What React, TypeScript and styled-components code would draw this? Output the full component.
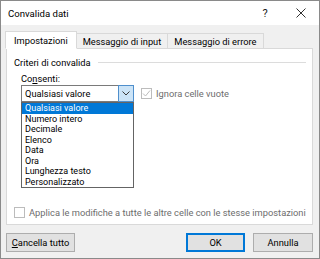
import React from 'react';
import styled, { createGlobalStyle } from 'styled-components';

const GlobalStyle = createGlobalStyle`
  html, body {
    margin: 0;
    padding: 0;
    background: #ffffff;
  }
  * {
    box-sizing: border-box;
  }
`;

const Window = styled.div`
  width: 320px;
  height: 259px;
  border: 1px solid #8a8a8a;
  display: flex;
  flex-direction: column;
  font-family: Roboto, 'Noto Sans', sans-serif;
  font-size: 9.3px;
  color: #000000;
  background: #f0f0f0;
  overflow: hidden;
`;

const TitleBar = styled.div`
  height: 24px;
  flex: none;
  display: flex;
  align-items: center;
  background: #ffffff;
`;

const Title = styled.div`
  flex: 1;
  padding-left: 7px;
  font-size: 9.6px;
  color: #000000;
`;

const TitleButton = styled.div`
  width: 36px;
  height: 24px;
  display: flex;
  align-items: center;
  justify-content: center;
  font-size: 11px;
  color: #1a1a1a;
`;

const Body = styled.div`
  flex: 1;
  display: flex;
  flex-direction: column;
  padding: 6px 6px 6px 4px;
`;

const TabRow = styled.div`
  display: flex;
  align-items: flex-end;
  height: 18px;
  margin-bottom: -1px;
  position: relative;
  z-index: 1;
`;

const Tab = styled.div<{ $active?: boolean }>`
  height: ${p => (p.$active ? '18px' : '15px')};
  padding: 0 ${p => (p.$active ? '8px' : '6px')};
  display: flex;
  align-items: center;
  border: 1px solid #d9d9d9;
  border-bottom: ${p => (p.$active ? '1px solid #ffffff' : 'none')};
  border-left: ${p => (p.$active ? '1px solid #d9d9d9' : 'none')};
  background: ${p => (p.$active ? '#ffffff' : '#f0f0f0')};
  margin-bottom: ${p => (p.$active ? '0' : '1px')};
  white-space: nowrap;
`;

const Panel = styled.div`
  height: 177px;
  flex: none;
  margin-left: 1px;
  background: #ffffff;
  border: 1px solid #d9d9d9;
  padding: 7px 6px 6px 7px;
  display: flex;
  flex-direction: column;
`;

const GroupHeader = styled.div`
  height: 12px;
  display: flex;
  align-items: center;
  gap: 7px;

  &::after {
    content: '';
    flex: 1;
    height: 1px;
    background: #dcdcdc;
  }
`;

const Group = styled.div`
  padding-left: 7px;
  display: flex;
  flex-direction: column;
`;

const FieldLabel = styled.div`
  height: 12px;
  margin-top: 4px;
  display: flex;
  align-items: center;
`;

const Accel = styled.span`
  text-decoration: underline;
  text-underline-offset: 1px;
`;

const ComboRow = styled.div`
  margin-top: 1px;
  display: flex;
  align-items: center;
  gap: 7px;
  height: 17px;
`;

const Combo = styled.div`
  position: relative;
  width: 113px;
  height: 17px;
  border: 1px solid #7a7a7a;
  display: flex;
  align-items: center;
  padding-left: 3px;
  background: #ffffff;
`;

const ComboValue = styled.span`
  flex: 1;
`;

const ComboArrow = styled.div`
  width: 16px;
  height: 17px;
  margin: -1px -1px -1px 0;
  border: 1px solid #4f8fcc;
  background: #cce4f7;
  display: flex;
  align-items: center;
  justify-content: center;
`;

const DropList = styled.ul`
  position: absolute;
  top: 16px;
  left: -1px;
  width: 113px;
  margin: 0;
  padding: 0;
  list-style: none;
  background: #ffffff;
  border: 1px solid #646464;
  z-index: 2;
`;

const DropItem = styled.li<{ $selected?: boolean }>`
  height: 10.5px;
  line-height: 10.5px;
  font-size: 9px;
  padding-left: 3px;
  background: ${p => (p.$selected ? '#0078d7' : 'transparent')};
  color: ${p => (p.$selected ? '#ffffff' : '#000000')};
  white-space: nowrap;
`;

const CheckRow = styled.div<{ $bottom?: boolean }>`
  display: flex;
  align-items: center;
  gap: 4px;
  height: 12px;
  color: #6d6d6d;
  margin-top: ${p => (p.$bottom ? 'auto' : '0')};
  white-space: nowrap;
`;

const CheckBox = styled.div`
  width: 11px;
  height: 11px;
  border: 1px solid #bcbcbc;
  background: #ffffff;
  display: flex;
  align-items: center;
  justify-content: center;
  flex: none;
`;

const ButtonRow = styled.div`
  margin-top: 8px;
  margin-left: 1px;
  display: flex;
  align-items: center;
  height: 19px;
`;

const Button = styled.div<{ $default?: boolean; $width: number }>`
  width: ${p => p.$width}px;
  height: 19px;
  display: flex;
  align-items: center;
  justify-content: center;
  background: #e1e1e1;
  border: 1px solid ${p => (p.$default ? '#0078d7' : '#adadad')};
  box-shadow: ${p => (p.$default ? 'inset 0 0 0 1px #0078d7' : 'none')};
`;

const Spacer = styled.div`
  flex: 1;
`;

const ButtonGap = styled.div`
  width: 8px;
  flex: none;
`;

const items = [
  'Qualsiasi valore',
  'Numero intero',
  'Decimale',
  'Elenco',
  'Data',
  'Ora',
  'Lunghezza testo',
  'Personalizzato',
];

const App: React.FC = () => {
  return (
    <>
      <GlobalStyle />
      <Window>
        <TitleBar>
          <Title>Convalida dati</Title>
          <TitleButton>?</TitleButton>
          <TitleButton>
            <svg width="10" height="10" viewBox="0 0 10 10">
              <path d="M0.5 0.5 L9.5 9.5 M9.5 0.5 L0.5 9.5" stroke="#1a1a1a" strokeWidth="0.9" fill="none" />
            </svg>
          </TitleButton>
        </TitleBar>
        <Body>
          <TabRow>
            <Tab $active>Impostazioni</Tab>
            <Tab>Messaggio di input</Tab>
            <Tab>Messaggio di errore</Tab>
          </TabRow>
          <Panel>
            <GroupHeader>Criteri di convalida</GroupHeader>
            <Group>
              <FieldLabel>
                Co<Accel>n</Accel>senti:
              </FieldLabel>
              <ComboRow>
                <Combo>
                  <ComboValue>Qualsiasi valore</ComboValue>
                  <ComboArrow>
                    <svg width="8" height="5" viewBox="0 0 8 5">
                      <path d="M0.5 0.5 L4 4 L7.5 0.5" stroke="#3a3a3a" strokeWidth="1" fill="none" />
                    </svg>
                  </ComboArrow>
                  <DropList>
                    {items.map((item, i) => (
                      <DropItem key={item} $selected={i === 0}>
                        {item}
                      </DropItem>
                    ))}
                  </DropList>
                </Combo>
                <CheckRow>
                  <CheckBox>
                    <svg width="9" height="9" viewBox="0 0 9 9">
                      <path d="M1 4.5 L3.5 7 L8 1.5" stroke="#bcbcbc" strokeWidth="1" fill="none" />
                    </svg>
                  </CheckBox>
                  Ignora celle vuote
                </CheckRow>
              </ComboRow>
            </Group>
            <CheckRow $bottom>
              <CheckBox />
              Applica le modifiche a tutte le altre celle con le stesse impostazioni
            </CheckRow>
          </Panel>
          <ButtonRow>
            <Button $width={69}>
              <span>
                <Accel>C</Accel>ancella tutto
              </span>
            </Button>
            <Spacer />
            <Button $width={59} $default>
              OK
            </Button>
            <ButtonGap />
            <Button $width={60}>Annulla</Button>
          </ButtonRow>
        </Body>
      </Window>
    </>
  );
};

export default App;
